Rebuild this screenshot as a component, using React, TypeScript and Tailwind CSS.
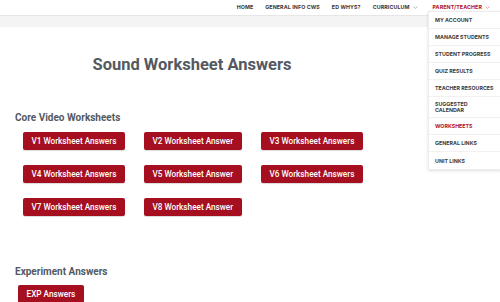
import React from 'react';

const NAV = ['HOME', 'GENERAL INFO CWS', 'ED WHYS?'];

const MENU: Array<{ label: string; active?: boolean }> = [
  { label: 'MY ACCOUNT' },
  { label: 'MANAGE STUDENTS' },
  { label: 'STUDENT PROGRESS' },
  { label: 'QUIZ RESULTS' },
  { label: 'TEACHER RESOURCES' },
  { label: 'SUGGESTED CALENDAR' },
  { label: 'WORKSHEETS', active: true },
  { label: 'GENERAL LINKS' },
  { label: 'UNIT LINKS' },
];

const CORE_ROWS = [
  ['V1 Worksheet Answers', 'V2 Worksheet Answer', 'V3 Worksheet Answers'],
  ['V4 Worksheet Answers', 'V5 Worksheet Answer', 'V6 Worksheet Answers'],
  ['V7 Worksheet Answers', 'V8 Worksheet Answer'],
];

function Chevron({ className }: { className?: string }) {
  return (
    <svg viewBox="0 0 8 5" className={className} fill="none" stroke="currentColor" strokeWidth="1.2">
      <path d="M1 1l3 3 3-3" />
    </svg>
  );
}

function AnswerButton({ label }: { label: string }) {
  return (
    <a
      href="#"
      className="inline-flex h-[18px] items-center rounded-[2px] bg-[#a50f1f] px-[8.5px] text-[8.2px] font-medium leading-none text-white shadow-[0_1px_1px_rgba(0,0,0,0.15)]"
    >
      {label}
    </a>
  );
}

export default function App() {
  return (
    <div className="relative h-[302px] w-[500px] overflow-hidden bg-white font-['Roboto','Liberation_Sans',sans-serif]">
      {/* top nav */}
      <header className="flex h-[15px] items-center justify-end bg-white pr-[8px] font-['Inter','Noto_Sans',sans-serif] text-[5.3px] font-bold tracking-[0.1px] text-[#3a3a3a]">
        <nav className="flex items-center gap-[12px] pr-[2px]">
          {NAV.map((n) => (
            <span key={n}>{n}</span>
          ))}
          <span className="flex items-center gap-[3px]">
            CURRICULUM
            <Chevron className="h-[3px] w-[5px] text-[#999]" />
          </span>
          <span className="flex items-center gap-[3px] pl-[3px] text-[#b3112a]">
            PARENT/TEACHER
            <Chevron className="h-[3px] w-[5px] text-[#d77]" />
          </span>
        </nav>
      </header>
      <div className="h-[12px] border-t border-[#e6e6e6] bg-[#f4f4f4]" />

      {/* dropdown */}
      <div className="absolute left-[428px] top-[11px] w-[74px] border border-[#ececec] bg-white font-['Inter','Noto_Sans',sans-serif] shadow-[0_1px_3px_rgba(0,0,0,0.12)]">
        {MENU.map((m, i) => (
          <div
            key={m.label}
            className={
              'flex items-center px-[6px] text-[5.3px] font-bold leading-[6px] ' +
              (m.label === 'SUGGESTED CALENDAR' ? 'h-[21px] pr-[30px] ' : 'h-[17px] ') +
              (i < MENU.length - 1 ? 'border-b border-[#f1f1f1] ' : '') +
              (m.active ? 'text-[#b3112a]' : 'text-[#3d3d3d]')
            }
          >
            {m.label}
          </div>
        ))}
      </div>

      <main className="px-[15px]">
        <h1 className="mt-[28px] pr-[116px] text-center text-[16.5px] font-bold leading-[20px] text-[#54595f]">
          Sound Worksheet Answers
        </h1>

        <h2 className="mt-[36px] text-[10px] font-bold leading-[14px] text-[#54595f]">Core Video Worksheets</h2>
        <div className="mt-[7px] flex flex-col gap-[15px] pl-[8px]">
          {CORE_ROWS.map((row, r) => (
            <div key={r} className="grid grid-cols-[121px_117px_120px]">
              {row.map((b) => (
                <div key={b} className="flex">
                  <AnswerButton label={b} />
                </div>
              ))}
            </div>
          ))}
        </div>

        <h2 className="mt-[49px] text-[10px] font-bold leading-[14px] text-[#54595f]">Experiment Answers</h2>
        <div className="mt-[6px] flex pl-[3px]">
          <AnswerButton label="EXP Answers" />
        </div>
      </main>
    </div>
  );
}
